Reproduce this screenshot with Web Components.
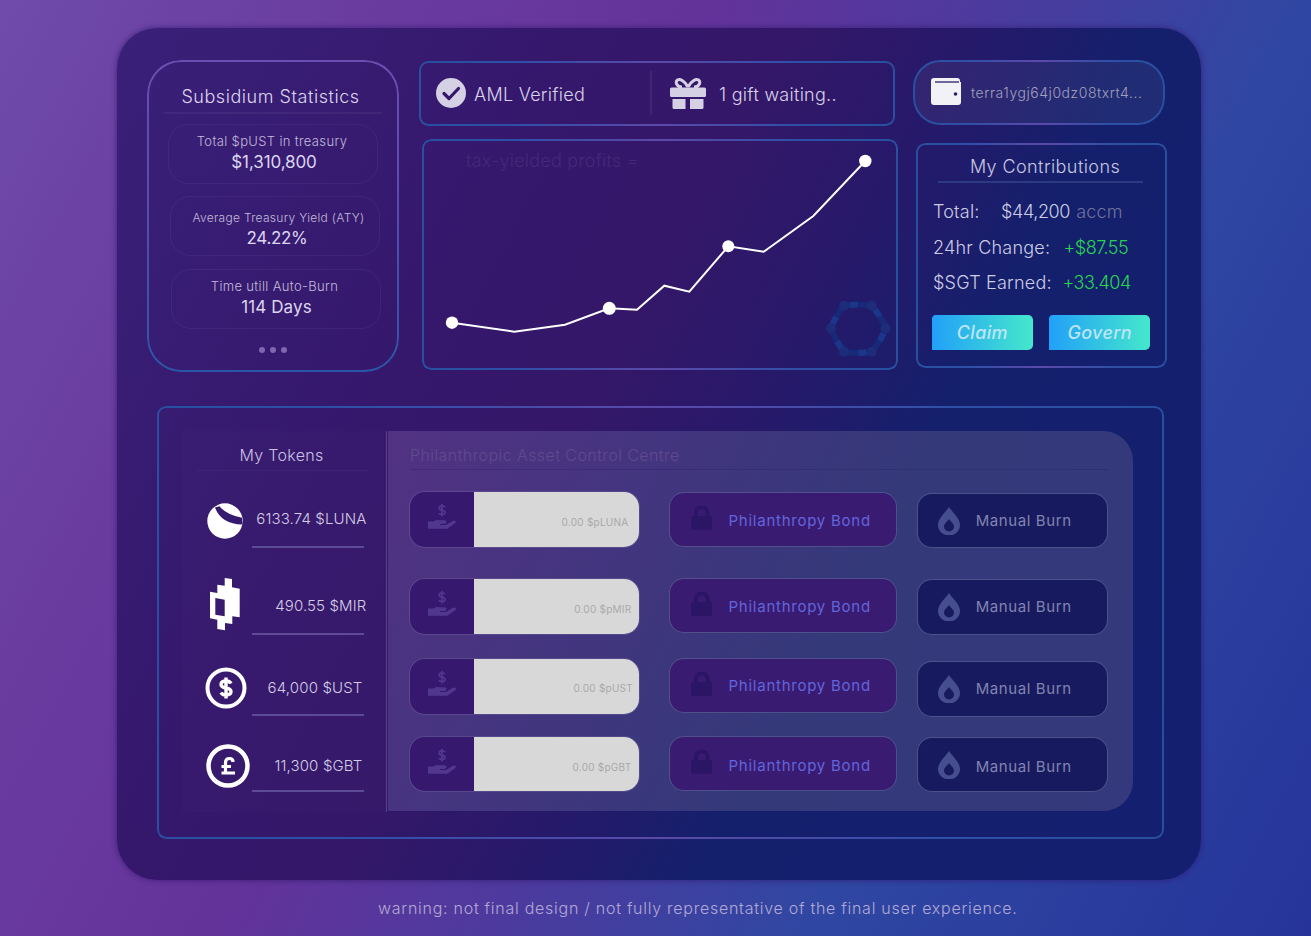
<!DOCTYPE html>
<html lang="en">
<head>
<meta charset="utf-8">
<title>Subsidium</title>
<style>
  html, body { margin: 0; height: 100%; }
  body {
    width: 1311px;
    height: 936px;
    overflow: hidden;
    font-family: Inter, "Liberation Sans", sans-serif;
    background: linear-gradient(118deg, #6f4bab 0%, #6a3ca0 20%, #64339a 39%, #4c3a9e 55%, #2f47a2 72%, #26349a 100%);
  }
</style>
</head>
<body>
<dash-shell>
  <stats-card slot="stats"></stats-card>
  <status-bar slot="status"></status-bar>
  <yield-chart slot="chart"></yield-chart>
  <wallet-card slot="wallet"></wallet-card>
  <contrib-card slot="contrib"></contrib-card>
  <asset-area slot="assets"></asset-area>
</dash-shell>
<foot-note>warning: not final design / not fully representative of the final user experience.</foot-note>

<script>
  const EDGE_H = 'linear-gradient(90deg,#28509f 0%,#2d50a6 20%,#5c49a9 50%,#2d50a6 80%,#28509f 100%)';
  const EDGE_V = 'linear-gradient(180deg,#6a4fb0 0%,#5a4cae 40%,#2b55a6 100%)';

  class GlowCard extends HTMLElement {
    constructor() {
      super();
      this.attachShadow({ mode: 'open' });
    }
    connectedCallback() {
      this.shadowRoot.innerHTML = `
        <style>
          :host { display: block; position: relative; box-sizing: border-box; border-radius: var(--r, 12px); }
          :host::before {
            content: ""; position: absolute; inset: 0; border-radius: inherit; padding: 1.7px;
            background: var(--edge, ${EDGE_H});
            -webkit-mask: linear-gradient(#000 0 0) content-box, linear-gradient(#000 0 0);
            -webkit-mask-composite: xor; mask-composite: exclude;
            pointer-events: none;
          }
        </style>
        <slot></slot>`;
    }
  }
  customElements.define('glow-card', GlowCard);

  class DashShell extends HTMLElement {
    constructor() {
      super();
      this.attachShadow({ mode: 'open' });
    }
    connectedCallback() {
      this.shadowRoot.innerHTML = `
        <style>
          :host {
            display: block; box-sizing: border-box;
            width: 1084px; height: 852px;
            margin: 28px 0 0 117px;
            padding: 31.5px 0 0 30px;
            border-radius: 40px;
            background: linear-gradient(118deg, #3a2079 0%, #35186c 30%, #341768 44%, #26196a 56%, #14206c 67%, #141f70 100%);
            box-shadow: 0 0 5px 1px rgba(50, 25, 110, .6);
          }
          .top { display: grid; grid-template-columns: 252px 478px 253px; column-gap: 20px; height: 312.5px; }
          .col3 { margin-left: -4px; }
          .mid { padding-top: 1px; }
          .bottom { margin: 34px 0 0 9.5px; }
          ::slotted([slot="chart"]) { margin: 13.5px 0 0 3px; }
          ::slotted([slot="contrib"]) { margin: 18.5px 0 0 3px; }
        </style>
        <div class="top">
          <slot name="stats"></slot>
          <div class="mid"><slot name="status"></slot><slot name="chart"></slot></div>
          <div class="col3"><slot name="wallet"></slot><slot name="contrib"></slot></div>
        </div>
        <div class="bottom"><slot name="assets"></slot></div>`;
    }
  }
  customElements.define('dash-shell', DashShell);

  class StatPill extends HTMLElement {
    constructor() {
      super();
      this.attachShadow({ mode: 'open' });
    }
    connectedCallback() {
      this.shadowRoot.innerHTML = `
        <style>
          :host {
            display: flex; flex-direction: column; align-items: center; justify-content: center;
            box-sizing: border-box; width: 210px; height: 60px; border-radius: 20px;
            border: 1.5px solid rgba(255,255,255,.05);
            color: #dcd6ee;
          }
          .label { margin-left: var(--lx, 0); font-size: var(--ls, 13px); line-height: 17px; font-weight: 300; color: #c2bbd9; letter-spacing: var(--lsp, .35px); }
          .value { margin-left: var(--vx, 0); font-size: 17px; line-height: 24px; font-weight: 400; letter-spacing: var(--vsp, .1px); }
        </style>
        <div class="label">${this.getAttribute('label')}</div>
        <div class="value">${this.getAttribute('value')}</div>`;
    }
  }
  customElements.define('stat-pill', StatPill);

  class StatsCard extends HTMLElement {
    constructor() {
      super();
      this.attachShadow({ mode: 'open' });
    }
    connectedCallback() {
      this.shadowRoot.innerHTML = `
        <style>
          :host { display: block; }
          glow-card { --r: 34px; --edge: ${EDGE_V}; height: 312.5px; padding: 24px 16px 0 16px; }
          h2 {
            margin: 0 0 0 1px; width: 218px; height: 30px; box-sizing: border-box; text-align: center;
            font-size: 18px; line-height: 24px; font-weight: 300; color: #dcd6ee; letter-spacing: .55px;
            padding: 1px 5px 0 0;
            border-bottom: 2px solid rgba(255,255,255,.05);
          }
          .a { margin: 10px 0 0 5px; --lx: -2px; --vx: 2px; --vsp: -.1px; }
          .b { margin: 12.5px 0 0 7px; padding-top: 7px; --ls: 12px; --lsp: .3px; --lx: 7px; --vx: 4px; --vsp: -.3px; }
          .c { margin: 13px 0 0 8px; padding-bottom: 2px; --lx: -3px; --vx: 1px; --vsp: .1px; }
          .dots { display: flex; gap: 5px; margin: 18px 0 0 95.7px; }
          .dots i { width: 6px; height: 6px; border-radius: 50%; background: #7f66ae; }
        </style>
        <glow-card>
          <h2>Subsidium Statistics</h2>
          <stat-pill class="a" label="Total $pUST in treasury" value="$1,310,800"></stat-pill>
          <stat-pill class="b" label="Average Treasury Yield (ATY)" value="24.22%"></stat-pill>
          <stat-pill class="c" label="Time utill Auto-Burn" value="114 Days"></stat-pill>
          <div class="dots"><i></i><i></i><i></i></div>
        </glow-card>`;
    }
  }
  customElements.define('stats-card', StatsCard);

  class StatusBar extends HTMLElement {
    constructor() {
      super();
      this.attachShadow({ mode: 'open' });
    }
    connectedCallback() {
      this.shadowRoot.innerHTML = `
        <style>
          :host { display: block; width: 476px; }
          glow-card { height: 65px; --r: 9px; display: flex; align-items: center; padding-left: 17px; }
          span { margin-top: 2px; font-size: 18px; font-weight: 300; color: #d9d3ea; letter-spacing: .28px; }
          .check { width: 30px; height: 30px; margin-right: 8px; flex: none; }
          .aml { width: 176px; }
          .sep { width: 2px; height: 44px; background: rgba(255,255,255,.06); margin-right: 18px; flex: none; }
          .gift { width: 36px; height: 31px; margin-right: 13px; flex: none; }
        </style>
        <glow-card>
          <svg class="check" viewBox="0 0 30 30"><circle cx="15" cy="15" r="15" fill="#d6d0e4"/><path d="M8 15.5l5 5 9.5-10" fill="none" stroke="#34176b" stroke-width="3.2" stroke-linecap="round" stroke-linejoin="round"/></svg>
          <span class="aml">AML Verified</span>
          <div class="sep"></div>
          <svg class="gift" viewBox="0 0 36 31" fill="#d6d0e4">
            <path d="M18 9C15 3 10 .5 7.5 2 5 4 6.5 9 12 9M18 9c3-6 8-8.500 10.500-7C31 4 29.500 9 24 9" fill="none" stroke="#d6d0e4" stroke-width="3"/>
            <rect x="0" y="9.500" width="36" height="9.500" rx="1.500"/>
            <path d="M2.500 21H15.500V31H4a1.500 1.500 0 0 1-1.500-1.500zM20 21H33.500V29.500a1.500 1.500 0 0 1-1.500 1.500H20z"/>
          </svg>
          <span>1 gift waiting..</span>
        </glow-card>`;
    }
  }
  customElements.define('status-bar', StatusBar);

  class YieldChart extends HTMLElement {
    constructor() {
      super();
      this.attachShadow({ mode: 'open' });
    }
    connectedCallback() {
      const pts = [[30,183.700],[92.300,192.700],[143,185.700],[187.300,169.300],[215,170.700],[242.300,146.700],[267.300,152.700],[306.300,107.300],[341.700,112.700],[391.300,77],[443.300,22]];
      const nodes = [[422,166.700],[449.700,166.700],[463.700,189.300],[449.700,212.700],[422,212.700],[409,189.300]];
      const cx = 436.300, cy = 189.500;
      // ring segments bulge a little outward between the six nodes
      const ring = nodes.map((n, i) => {
        const m = nodes[(i + 1) % 6];
        const qx = cx + ((n[0] + m[0]) / 2 - cx) * 1.1;
        const qy = cy + ((n[1] + m[1]) / 2 - cy) * 1.1;
        return `Q${qx.toFixed(1)} ${qy.toFixed(1)} ${m[0]} ${m[1]}`;
      }).join(' ');
      const d = `M${nodes[0][0]} ${nodes[0][1]} ${ring}`;
      this.shadowRoot.innerHTML = `
        <style>
          :host { display: block; width: 475.5px; height: 230.5px; }
          glow-card { height: 230.5px; --r: 9px; }
          svg { display: block; width: 475.5px; height: 230.5px; }
          .tag {
            position: absolute; left: 44px; top: 10px;
            font-size: 18px; line-height: 24px; font-weight: 300; color: #452878; letter-spacing: .22px;
          }
        </style>
        <glow-card>
          <svg viewBox="0 0 475.500 230.500">
            <path d="${d}" fill="none" stroke="#18297a" stroke-width="6"/>
            <path d="${d}" fill="none" stroke="#1c3789" stroke-width="6" stroke-dasharray="8 19" stroke-dashoffset="-6"/>
            ${nodes.map(n => `<circle cx="${n[0]}" cy="${n[1]}" r="5" fill="#1d2d7a"/>`).join('')}
            <polyline points="${pts.map(p => p.join(',')).join(' ')}" fill="none" stroke="#fff" stroke-width="2"/>
            <circle cx="30" cy="183.700" r="6.200" fill="#fff"/>
            <circle cx="187.300" cy="169.300" r="6.500" fill="#fff"/>
            <circle cx="306.300" cy="107.300" r="6" fill="#fff"/>
            <circle cx="443.300" cy="22" r="6.200" fill="#fff"/>
          </svg>
          <div class="tag">tax-yielded profits =</div>
        </glow-card>`;
    }
  }
  customElements.define('yield-chart', YieldChart);

  class WalletCard extends HTMLElement {
    constructor() {
      super();
      this.attachShadow({ mode: 'open' });
    }
    connectedCallback() {
      this.shadowRoot.innerHTML = `
        <style>
          :host { display: block; width: 251.5px; }
          glow-card {
            height: 65px; --r: 27px; display: flex; align-items: center; padding-left: 18px;
            background: rgba(255,255,255,.055);
          }
          svg { width: 30px; height: 27px; margin: -1px 10px 0 0; flex: none; }
          span { font-size: 14px; font-weight: 300; color: #a3a0bd; letter-spacing: .55px; white-space: nowrap; }
        </style>
        <glow-card>
          <svg viewBox="0 0 30 27"><path d="M3 0H26a3 3 0 0 1 3 3V4H30V24a3 3 0 0 1-3 3H3a3 3 0 0 1-3-3V3a3 3 0 0 1 3-3z" fill="#f2f1f6"/><path d="M4 4H28" stroke="#2a1c6c" stroke-width="1.300"/><circle cx="24.500" cy="16" r="1.800" fill="#2a1c6c"/></svg>
          <span>terra1ygj64j0dz08txrt4...</span>
        </glow-card>`;
    }
  }
  customElements.define('wallet-card', WalletCard);

  class ContribCard extends HTMLElement {
    constructor() {
      super();
      this.attachShadow({ mode: 'open' });
    }
    connectedCallback() {
      this.shadowRoot.innerHTML = `
        <style>
          :host { display: block; width: 251px; }
          glow-card { height: 224.5px; --r: 9px; padding: 11px 16px 0 17px; color: #cdcde4; }
          h2 {
            margin: 0 0 0 5px; width: 205px; height: 29px; box-sizing: border-box; text-align: center;
            font-size: 18px; line-height: 24px; font-weight: 300; color: #c9c9e2; letter-spacing: .42px;
            padding: 1px 0 0 9px;
            border-bottom: 2px solid #2c3a82;
          }
          .row { display: flex; font-size: 18px; line-height: 24px; font-weight: 300; letter-spacing: .2px; height: 35.5px; }
          .row:first-of-type { margin-top: 17px; }
          .row b { font-weight: 300; flex: none; }
          .row em { font-style: normal; color: #26d651; letter-spacing: -.5px; }
          .row i { font-style: normal; letter-spacing: -.4px; }
          .row small { font-size: 18px; color: #72729a; letter-spacing: .15px; margin-left: 1px; }
          .btns { display: flex; gap: 16.700px; margin: 8.500px 0 0 -1px; }
          button {
            width: 100.700px; height: 35px; padding: 0; border: 0; border-radius: 4px 5px 5px 0;
            background: linear-gradient(90deg, #22a0f8, #44e8cc);
            color: #bde5f4; font: italic 500 18px Inter, "Liberation Sans", sans-serif; letter-spacing: .35px;
          }
        </style>
        <glow-card>
          <h2>My Contributions</h2>
          <div class="row"><b style="width:68px">Total:</b><span><i>$44,200</i> <small>accm</small></span></div>
          <div class="row"><b style="width:130.500px">24hr Change:</b><em>+$87.55</em></div>
          <div class="row"><b style="width:129.500px">$SGT Earned:</b><em>+33.404</em></div>
          <div class="btns"><button>Claim</button><button>Govern</button></div>
        </glow-card>`;
    }
  }
  customElements.define('contrib-card', ContribCard);

  const TOKEN_ICONS = {
    luna: `<svg style="margin-left:-2px" width="36" height="36" viewBox="0 0 36 36"><circle cx="18" cy="18" r="17.700" fill="#fff"/><path d="M8 4.500L12.500 3.300Q19 11.500 35 14.800L35.500 21.500Q14 21 8 4.500Z" fill="#351a70"/></svg>`,
    mir: `<svg style="margin-left:-1px" width="30" height="53" viewBox="0 0 30 53"><path fill="#fff" fill-rule="evenodd" d="M14.700 0L22 1V9.300L29.700 10.700V39.300L22.300 38.300V46L15 45V52.300L7.300 51V41.700L0 40.300V13.700L7.300 15V6.700L14.700 7.700zM5.300 20V36.700L14.700 38.300V21.700z"/></svg>`,
    ust: `<svg style="margin-left:1px" width="42" height="42" viewBox="0 0 42 42"><circle cx="21" cy="21" r="18.500" fill="none" stroke="#fff" stroke-width="4"/><path d="M26 16.500C25 14.500 23.500 14 21 14c-3 0-5 1-5 3.400s2 3 5 3.600 5 1.200 5 3.600-2 3.400-5 3.400c-2.500 0-4-.6-5-2.600M21 10.500V31.500" fill="none" stroke="#fff" stroke-width="3.400"/></svg>`,
    gbt: `<svg style="margin-left:4px" width="44" height="44" viewBox="0 0 44 44"><circle cx="22" cy="22" r="19.500" fill="none" stroke="#fff" stroke-width="4.500"/><path d="M27 18C27 15.500 25.500 14.500 23.500 14.500 21 14.500 19.500 16 19.500 18.500V28M15.500 22.500H25M15.500 29H29" fill="none" stroke="#fff" stroke-width="3.200"/></svg>`
  };

  class TokenRow extends HTMLElement {
    constructor() {
      super();
      this.attachShadow({ mode: 'open' });
    }
    connectedCallback() {
      this.shadowRoot.innerHTML = `
        <style>
          :host { display: block; box-sizing: border-box; padding-top: var(--pt); }
          .line { display: flex; align-items: center; height: var(--lh); color: #d4cde6; }
          .ico { width: 44px; margin-left: 22px; display: flex; justify-content: center; flex: none; }
          svg { display: block; flex: none; }
          .amt {
            margin-left: auto; padding-right: var(--rm); transform: translateY(var(--dy, 0));
            font-size: 15px; line-height: 20px; font-weight: 300; letter-spacing: .14px; white-space: nowrap;
          }
          .rule { width: 112px; height: 2px; margin: var(--gap) 0 0 70px; background: #5e4b96; }
        </style>
        <div class="line"><div class="ico">${TOKEN_ICONS[this.getAttribute('icon')]}</div><div class="amt"><slot></slot></div></div>
        <div class="rule"></div>`;
    }
  }
  customElements.define('token-row', TokenRow);

  class AssetRow extends HTMLElement {
    constructor() {
      super();
      this.attachShadow({ mode: 'open' });
    }
    connectedCallback() {
      const hand = `<svg width="28" height="26" viewBox="0 0 28 26" fill="#52378f"><path d="M17 4.200C16.400 3.300 15.300 2.900 14 2.900c-1.700 0-2.800.7-2.800 2.100s1.200 1.900 2.800 2.200 2.900.9 2.900 2.300-1.200 2.100-2.900 2.100c-1.300 0-2.400-.4-3-1.300M14 1v12.500" fill="none" stroke="#52378f" stroke-width="1.800"/><path d="M0 18.500h5.500q3-2 6-1.200h5q2 0 2 1.800t-2 1.800h-4.500v1h6l6.500-4q2-.8 3 .2t-.5 2.200l-7 5q-.7.500-1.500.500H0z"/></svg>`;
      const lock = `<svg width="21.500" height="24" viewBox="0 0 22 24" fill="#2b1565"><path d="M5 10V7a6 6 0 0 1 12 0v3" fill="none" stroke="#2b1565" stroke-width="4"/><rect y="10" width="22" height="14" rx="2"/></svg>`;
      const drop = `<svg width="22" height="28" viewBox="0 0 22 28"><path fill="#474e8f" fill-rule="evenodd" d="M11 0C14 5 22 11 22 18a11 10.500 0 0 1-22 0C0 11 8 5 11 0zM11 12C9.500 14.500 6 16.500 6 19.500a5 5 0 0 0 10 0C16 16.500 12.500 14.500 11 12z"/></svg>`;
      this.shadowRoot.innerHTML = `
        <style>
          :host { display: grid; grid-template-columns: 228.500px 258.500px 211.200px; align-items: start; }
          .in {
            margin-top: var(--mi, 1px); height: 54.700px; display: flex; border-radius: 15px; overflow: hidden;
            box-shadow: 0 0 0 1px rgba(255,255,255,.1);
          }
          .in .l { width: 63.500px; background: #36186f; display: flex; align-items: center; justify-content: center; padding: 0 0 7px 1px; box-sizing: border-box; }
          .in .r {
            flex: 1; background: #d8d8d8; color: #a9a9a9; font-size: 10px; font-weight: 400; letter-spacing: .25px;
            display: flex; align-items: center; justify-content: flex-end; padding: var(--ct, 4px) var(--pr, 10px) 0 0;
          }
          .btn {
            box-sizing: border-box; border-radius: 15px; border: 1.500px solid rgba(255,255,255,.12);
            display: flex; align-items: center; font-size: 15px; font-weight: 400; white-space: nowrap;
          }
          .bond { height: 55px; width: 228.500px; margin-left: 30px; background: #3a1b72; background-clip: padding-box; color: #6265db; padding-left: 21px; letter-spacing: .75px; }
          .bond svg { margin: -3px 16.500px 0 0; flex: none; }
          .bond span { margin-top: var(--bt, 3px); }
          .burn { height: 55.700px; margin: var(--mb, 1px) 0 0 19.700px; width: 191.500px; background: #181a5f; background-clip: padding-box; color: #8085b0; padding-left: 20px; letter-spacing: .6px; }
          .burn svg { margin-right: 16px; flex: none; }
          .burn span { margin-top: var(--ut, 0); }
        </style>
        <div class="in"><div class="l">${hand}</div><div class="r">0.00 ${this.getAttribute('coin')}</div></div>
        <div class="btn bond">${lock}<span>Philanthropy Bond</span></div>
        <div class="btn burn">${drop}<span>Manual Burn</span></div>`;
    }
  }
  customElements.define('asset-row', AssetRow);

  class AssetArea extends HTMLElement {
    constructor() {
      super();
      this.attachShadow({ mode: 'open' });
    }
    connectedCallback() {
      this.shadowRoot.innerHTML = `
        <style>
          :host { display: block; width: 1007px; }
          glow-card { height: 432.500px; --r: 9px; display: flex; padding: 25px 0 0 25px; }
          .tokens {
            width: 205px; height: 381px; margin-right: 1.500px; box-sizing: border-box; flex: none;
            background: rgba(255,255,255,.012);
            border-right: 1.500px solid #5a4290;
          }
          h3 {
            margin: 0; box-sizing: border-box; font-size: 16px; line-height: 20px; font-weight: 300;
            letter-spacing: .3px;
          }
          .tokens h3 {
            height: 40px; margin-left: 14px; width: 172px; padding: 14px 0 0 0; text-align: center; color: #cbc3e2;
            border-bottom: 1px solid rgba(255,255,255,.04);
          }
          .assets {
            width: 745px; height: 380px; box-sizing: border-box; flex: none; padding: 0 0 0 22px;
            border-radius: 0 30px 30px 0;
            background: linear-gradient(118deg, #523283 0%, #43357f 30%, #34397a 58%, #33397c 100%);
          }
          .assets h3 {
            height: 39px; width: 698px; padding-top: 14px; color: #604a8f; letter-spacing: .42px;
            border-bottom: 1px solid rgba(30,20,90,.25);
          }
          .rows { margin-top: 21.500px; display: grid; grid-template-rows: 86px 80.500px 77.500px auto; }
        </style>
        <glow-card>
          <div class="tokens">
            <h3>My Tokens</h3>
            <token-row icon="luna" style="--pt:30px;--lh:40px;--gap:5px;--rm:19px;--dy:-2px">6133.74 $LUNA</token-row>
            <token-row icon="mir" style="--pt:30px;--lh:53px;--gap:2px;--rm:19px;--dy:1px">490.55 $MIR</token-row>
            <token-row icon="ust" style="--pt:32px;--lh:42px;--gap:5px;--rm:23px">64,000 $UST</token-row>
            <token-row icon="gbt" style="--pt:28px;--lh:44px;--gap:2px;--rm:23px">11,300 $GBT</token-row>
          </div>
          <div class="assets">
            <h3>Philanthropic Asset Control Centre</h3>
            <div class="rows">
              <asset-row coin="$pLUNA" style="--mi:.800px;--mb:1.200px;--bt:3px"></asset-row>
              <asset-row coin="$pMIR" style="--mi:1.500px;--mb:1.500px;--bt:2px;--pr:7px;--ct:5px"></asset-row>
              <asset-row coin="$pUST" style="--mi:1.300px;--mb:3px;--bt:0px;--pr:5.500px;--ct:3px"></asset-row>
              <asset-row coin="$pGBT" style="--mi:1.200px;--mb:1.200px;--bt:5px;--ut:3px;--pr:7px;--ct:6px"></asset-row>
            </div>
          </div>
        </glow-card>`;
    }
  }
  customElements.define('asset-area', AssetArea);

  class FootNote extends HTMLElement {
    constructor() {
      super();
      this.attachShadow({ mode: 'open' });
    }
    connectedCallback() {
      this.shadowRoot.innerHTML = `
        <style>
          :host {
            display: block; margin: 16px 0 0 378px; font-size: 16px; line-height: 24px; font-weight: 300;
            color: #b3a9d6; letter-spacing: .73px; white-space: nowrap;
          }
        </style>
        <slot></slot>`;
    }
  }
  customElements.define('foot-note', FootNote);
</script>
</body>
</html>
